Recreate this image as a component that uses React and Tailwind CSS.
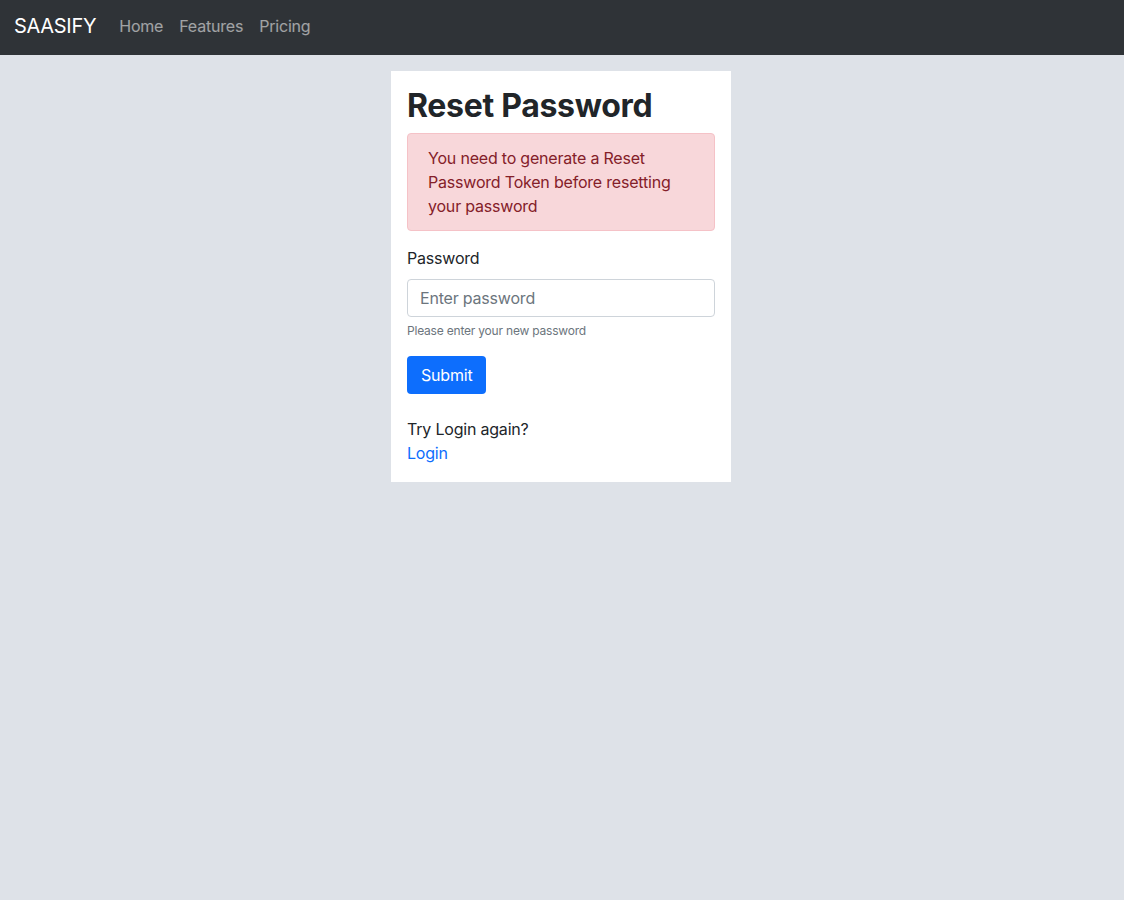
import React from 'react';

const App = () => {
  return (
    <div className="min-h-screen bg-[#dee2e8] font-['Inter','Noto_Sans',sans-serif] text-[#212529] tracking-[-0.2px]">
      {/* Navbar */}
      <nav className="h-[55px] bg-[#2f3337] flex items-center px-[14px] pb-[3px]">
        <span className="text-white text-[20px] mr-[23px] tracking-[-0.3px]">SAASIFY</span>
        <div className="flex gap-[16px] text-[16px] text-white/55">
          <a href="#">Home</a>
          <a href="#">Features</a>
          <a href="#">Pricing</a>
        </div>
      </nav>

      {/* Card */}
      <div className="flex justify-center pt-[16px]">
        <div className="w-[340px] mr-[2px] bg-white p-[16px] pb-[17px]">
          <h1 className="text-[32px] font-bold leading-[1.2] mb-[8px] tracking-[-0.3px]">Reset Password</h1>
          <div className="bg-[#f8d7da] border border-[#f5c2c7] text-[#842029] rounded-[4px] pl-[20px] pr-[16px] py-[12px] text-[16px] leading-[24px] mb-[15px]">
            You need to generate a Reset Password Token before resetting your password
          </div>
          <form onSubmit={(e) => e.preventDefault()}>
            <label className="block text-[16px] leading-[24px] mb-[9px]">Password</label>
            <input
              type="password"
              placeholder="Enter password"
              className="w-full h-[38px] border border-[#ced4da] rounded-[4px] px-[12px] text-[16px] placeholder:text-[#6c757d] outline-none"
            />
            <div className="text-[12px] text-[#6c757d] mt-[5px] leading-[18px]">Please enter your new password</div>
            <button className="mt-[16px] h-[38px] px-[14px] bg-[#0d6efd] text-white text-[16px] rounded-[4px]">Submit</button>
          </form>
          <div className="mt-[23px] text-[16px] leading-[24px]">
            <div>Try Login again?</div>
            <a href="#" className="text-[#0d6efd]">Login</a>
          </div>
        </div>
      </div>
    </div>
  );
};

export default App;
